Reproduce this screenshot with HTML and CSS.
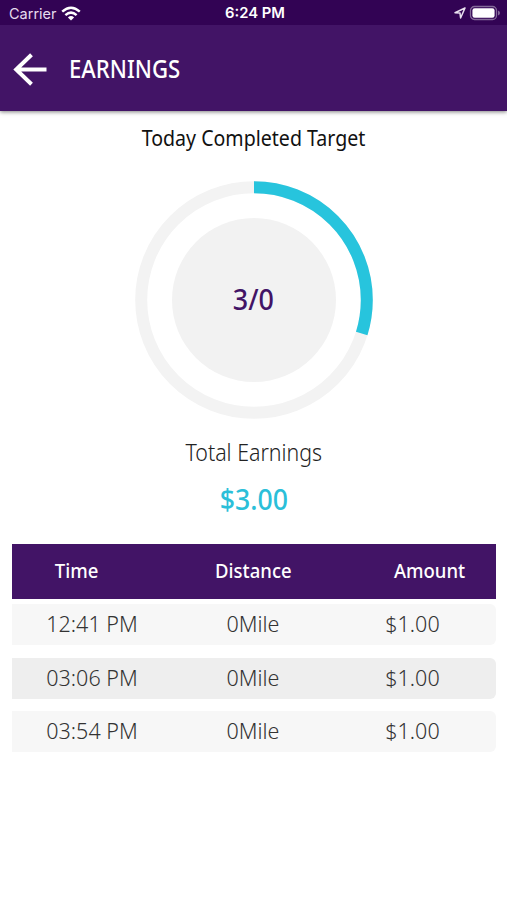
FILE: index.html
```html
<!DOCTYPE html>
<html lang="en">
<head>
<meta charset="utf-8">
<title>Earnings</title>
<link rel="stylesheet" href="styles.css">
</head>
<body>
<header class="top">
  <div class="status">
    <div class="status-left">
      <span class="carrier">Carrier</span>
      <svg class="wifi" width="20" height="15" viewBox="0 0 20 15" fill="none" stroke="#fff" stroke-width="2.5"><path d="M1.2 5.6Q10 -2.2 18.8 5.6"/><path d="M4.4 9.1Q10 4.2 15.6 9.1"/><path d="M10 14.5L6.9 11.4Q10 8.7 13.1 11.4Z" fill="#fff" stroke="none"/></svg>
    </div>
    <span class="clock">6:24 PM</span>
    <div class="status-right">
      <svg width="12" height="12" viewBox="0 0 12 12" fill="none" stroke="#e9e0ef" stroke-width="1.5" stroke-linejoin="round"><path d="M11 1L1 5.7L6 6.1L6.6 11Z"/></svg>
      <svg width="32" height="16" viewBox="0 0 32 16"><rect x="1.5" y="1.5" width="26" height="13" rx="4" fill="none" stroke="#846a99" stroke-width="1.3"/><rect x="3.4" y="3.3" width="22.2" height="9.4" rx="2.2" fill="#fff"/><path d="M29 5.6Q31 6.3 31 8T29 10.4Z" fill="#846a99"/></svg>
    </div>
  </div>
  <div class="bar">
    <svg width="34" height="34" viewBox="0 0 34 34" fill="none" stroke="#fff" stroke-width="4"><path d="M33.5 17.5H3M18.5 2.7L3.2 17.5L18.5 32.3"/></svg>
    <h1 class="title">EARNINGS</h1>
  </div>
</header>
<main>
  <h2 class="target">Today Completed Target</h2>
  <div class="donut">
    <svg width="240" height="240" viewBox="0 0 240 240"><circle cx="120" cy="120" r="112.8" fill="none" stroke="#f3f3f3" stroke-width="12"/><circle cx="120" cy="120" r="82" fill="#f2f2f2"/><circle cx="120" cy="120" r="112.8" fill="none" stroke="#27c4dd" stroke-width="12" pathLength="100" stroke-dasharray="29.8 100" transform="rotate(-90 120 120)"/></svg>
    <span class="count">3/0</span>
  </div>
  <p class="total-label">Total Earnings</p>
  <p class="total">$3.00</p>
  <div class="table">
    <div class="row head"><span>Time</span><span>Distance</span><span>Amount</span></div>
    <div class="row"><span>12:41 PM</span><span>0Mile</span><span>$1.00</span></div>
    <div class="row alt"><span>03:06 PM</span><span>0Mile</span><span>$1.00</span></div>
    <div class="row"><span>03:54 PM</span><span>0Mile</span><span>$1.00</span></div>
  </div>
</main>
</body>
</html>
```
FILE: styles.css
```css
* { box-sizing: border-box; }
body { margin: 0; background: #fff; font-family: "Noto Sans", "Open Sans", sans-serif; }
h1, h2, p { margin: 0; }
.top { height: 111px; background: #421466; box-shadow: 0 1px 4px rgba(0,0,0,.5); color: #fff; }
.status { height: 25px; background: #320354; display: grid; grid-template-columns: 1fr auto 1fr; align-items: center; padding: 1px 6px 0 9px; font-family: Inter, sans-serif; font-size: 14.5px; }
.status-left { display: flex; align-items: center; gap: 4px; color: #e6dcee; }
.status-right { display: flex; align-items: center; justify-content: flex-end; gap: 3px; }
.clock { font-size: 14.8px; font-weight: 600; }
.bar { height: 86px; display: flex; align-items: center; gap: 22px; padding: 2px 0 0 13px; }
.title { font-size: 25px; font-weight: 550; line-height: 34px; transform: scaleX(.885); transform-origin: left; margin-top: -2px; }
main { display: flex; flex-direction: column; align-items: center; }
.target { margin-top: 11px; font-size: 22.5px; line-height: 32px; font-weight: 400; color: #111; transform: scaleX(.87); white-space: nowrap; }
.donut { display: grid; place-items: center; margin-top: 25px; height: 241px; }
.donut > * { grid-area: 1 / 1; }
.count { font-size: 28px; font-weight: 550; color: #421466; transform: scaleX(.96); margin-top: -1px; }
.total-label { margin-top: 16px; font-size: 24px; line-height: 32px; font-weight: 300; color: #222; transform: scaleX(.89); }
.total { margin-top: 13px; font-size: 28px; line-height: 36px; font-weight: 550; color: #2bbfd9; transform: scaleX(.95); }
.table { width: 484px; margin-top: 27px; display: grid; gap: 12.5px; }
.row { height: 41px; display: grid; grid-template-columns: 161px 161px 158px; align-items: center; justify-items: center; background: #f7f7f7; border-radius: 0 6px 6px 0; font-size: 21.5px; font-weight: 330; color: #333; padding-bottom: 2px; }
.row span { white-space: nowrap; }
.alt { background: #eee; }
.head { height: 55px; margin-bottom: -7.5px; grid-template-columns: 131px 221px 132px; background: #421466; color: #fff; border-radius: 0; font-size: 20px; font-weight: 550; }
.head span { transform: scaleX(.925); }
```
